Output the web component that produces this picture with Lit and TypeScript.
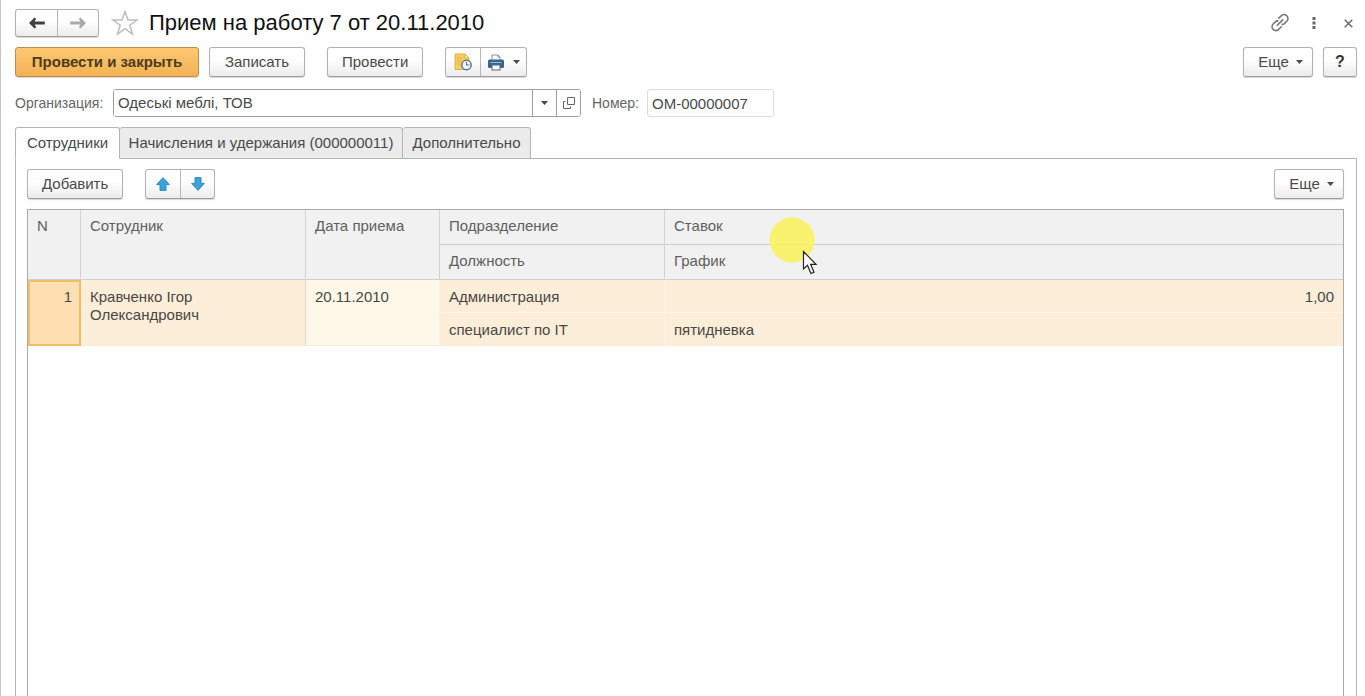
import { LitElement, html, css, svg } from "lit";
import { customElement, property, state } from "lit/decorators.js";
import { classMap } from "lit/directives/class-map.js";

interface HireRow {
  n: number;
  employee: string;
  date: string;
  department: string;
  position: string;
  rate: string;
  schedule: string;
}

const ROWS: HireRow[] = [
  {
    n: 1,
    employee: "Кравченко Ігор Олександрович",
    date: "20.11.2010",
    department: "Администрация",
    position: "специалист по IT",
    rate: "1,00",
    schedule: "пятидневка",
  },
];

const TABS = [
  { label: "Сотрудники", size: "short" },
  { label: "Начисления и удержания (000000011)", size: "long" },
  { label: "Дополнительно", size: "medium" },
];

const caret = html`<svg class="caret" width="7" height="4" viewBox="0 0 7 4" aria-hidden="true"><path d="M0 0H7L3.5 4Z" fill="#4a4a4a" /></svg>`;

const longArrow = (color: string, flip: boolean) => html`<svg width="16" height="12" viewBox="0 0 16 12" aria-hidden="true">
  <g transform=${flip ? "translate(16 0) scale(-1 1)" : ""}>
    <path d="M0 6L5.500 .5L7.200 1.800L5.600 4.600H15.800V7.400H5.600L7.200 10.200L5.500 11.500Z" fill=${color} />
  </g>
</svg>`;

const blueArrow = (down: boolean) => html`<svg width="14" height="14" viewBox="0 0 14 14" aria-hidden="true">
  <g transform=${down ? "rotate(180 7 7)" : ""}>${svg`<path d="M7 .6L13.300 7.600H10V13.400H4V7.600H.7Z" fill="#3ea3dc" stroke="#2f87c0" stroke-width="1" stroke-linejoin="round" />`}</g>
</svg>`;

@customElement("employee-table")
export class EmployeeTable extends LitElement {
  @property({ attribute: false }) rows: HireRow[] = [];

  static styles = css`
    :host {
      display: block;
      border: 1px solid #a9a9a9;
      border-bottom: 0;
      background: #fff;
      overflow: hidden;
    }
    table {
      width: 100%;
      table-layout: fixed;
      border-collapse: separate;
      border-spacing: 0;
      font-size: 15px;
      line-height: 18px;
      color: #4a4743;
    }
    .c-n { width: 53px; }
    .c-employee { width: 225px; }
    .c-date { width: 134px; }
    .c-department { width: 225px; }
    th {
      box-sizing: border-box;
      height: 35px;
      padding: 7px 9px;
      background: #f1f1f1;
      color: #5f5f5f;
      font-weight: 400;
      text-align: left;
      vertical-align: top;
      border-right: 1px solid #d2d2d2;
      border-bottom: 1px solid #cfcfcf;
    }
    th.last, td.last { border-right: 0; }
    td {
      box-sizing: border-box;
      height: 33px;
      padding: 8px 9px 6px;
      vertical-align: top;
      background: #fdeeda;
      border-right: 1px solid #fdf2e2;
      border-bottom: 1px solid #fef5e8;
    }
    td.current {
      background: #fddfb1;
      border: 2px solid #f3bd68;
      padding: 6px 7px;
      text-align: right;
    }
    td.employee { border-right-color: #e0d8cc; }
    td.date { background: #fff8e8; }
    td.number { text-align: right; }
    .bottom td, td.tall { border-bottom-color: #f3ece3; }
    td.current.tall { border-bottom-color: #f3bd68; }
  `;

  render() {
    return html`
      <table>
        <colgroup>
          <col class="c-n" /><col class="c-employee" /><col class="c-date" /><col class="c-department" /><col />
        </colgroup>
        <thead>
          <tr>
            <th rowspan="2">N</th>
            <th rowspan="2">Сотрудник</th>
            <th rowspan="2">Дата приема</th>
            <th>Подразделение</th>
            <th class="last">Ставок</th>
          </tr>
          <tr>
            <th>Должность</th>
            <th class="last">График</th>
          </tr>
        </thead>
        <tbody>
          ${this.rows.map(
            (r) => html`
              <tr>
                <td rowspan="2" class="current tall">${r.n}</td>
                <td rowspan="2" class="employee tall">${r.employee}</td>
                <td rowspan="2" class="date tall">${r.date}</td>
                <td>${r.department}</td>
                <td class="number last">${r.rate}</td>
              </tr>
              <tr class="bottom">
                <td>${r.position}</td>
                <td class="last">${r.schedule}</td>
              </tr>
            `
          )}
        </tbody>
      </table>
    `;
  }
}

@customElement("app-root")
export class AppRoot extends LitElement {
  @state() private activeTab = 0;

  static styles = css`
    :host {
      display: flex;
      flex-direction: column;
      box-sizing: border-box;
      position: relative;
      height: 100vh;
      overflow: hidden;
      padding: 9px 8px 0 14px;
      border-left: 1px solid #c4c4cb;
      background: #fff;
      color: #4a4a4a;
      font: 15px/18px "Liberation Sans", Arial, sans-serif;
    }
    button, input {
      box-sizing: border-box;
      margin: 0;
      font: inherit;
      color: inherit;
    }
    button {
      display: inline-flex;
      align-items: center;
      justify-content: center;
      padding: 0;
    }
    .row { display: flex; align-items: center; flex: none; }
    .spacer { flex: 1; }
    .title-row { height: 28px; margin-right: -8px; }
    h1 {
      margin: 0 0 0 10px;
      font-size: 22px;
      line-height: 26px;
      font-weight: 400;
      color: #111;
    }
    .btn, .group {
      box-sizing: border-box;
      height: 30px;
      border: 1px solid #b3b3b3;
      border-bottom-color: #9c9c9c;
      border-radius: 3px;
      background: linear-gradient(#fff 40%, #ececec);
      box-shadow: 0 1px 1px #d8d8d8;
    }
    .btn { min-width: 96px; padding: 0 14px; white-space: nowrap; }
    .btn.primary {
      min-width: 184px;
      border-color: #b98f4e;
      background: linear-gradient(#fdc873, #f2b255);
      color: #4e3b1c;
      font-weight: 700;
    }
    .btn.more { min-width: 70px; padding: 0 7px 0 12px; gap: 7px; }
    .btn.help { min-width: 34px; padding: 0; font-weight: 700; font-size: 16px; color: #333; }
    .group { display: inline-flex; overflow: hidden; }
    .group button { border: 0; background: none; width: 34px; }
    .group button + button { border-left: 1px solid #b8b8b8; }
    .group.nav { height: 28px; }
    .group.nav button { width: 41px; }
    .group .print { width: 46px; gap: 8px; }
    .star, .plain { border: 0; background: none; }
    .star { width: 28px; height: 28px; margin-left: 12px; }
    .plain { width: 34px; height: 28px; }
    .commands { margin-top: 10px; height: 30px; }
    .save { margin-left: 10px; }
    .post { margin-left: 22px; }
    .commands .group { margin-left: 22px; }
    .commands .help { margin-left: 10px; }
    .fields { margin-top: 12px; height: 28px; }
    .org-label { width: 98px; }
    .org-label, .num-label { font-size: 14px; color: #666; }
    .combo {
      display: flex;
      box-sizing: border-box;
      width: 468px;
      height: 28px;
      border: 1px solid #9f9f9f;
      border-radius: 3px;
      overflow: hidden;
    }
    .combo input { flex: 1; min-width: 0; border: 0; padding: 0 4px; background: #fff; }
    .combo button { width: 24px; border: 0; border-left: 1px solid #9f9f9f; background: #fff; }
    .num-label { margin: 0 5px 0 11px; width: 50px; }
    .num { width: 127px; height: 28px; border: 1px solid #dcdcdc; border-radius: 3px; padding: 0 4px; background: #fff; }
    .tabs { display: flex; flex: none; margin-top: 10px; position: relative; z-index: 1; }
    .tab {
      height: 32px;
      border: 1px solid #b4b4b4;
      border-left-width: 0;
      border-radius: 3px 3px 0 0;
      background: #ebebeb;
      padding: 0 8px;
      white-space: nowrap;
    }
    .tab:first-child { border-left-width: 1px; }
    .tab.short { min-width: 105px; }
    .tab.long { min-width: 283px; }
    .tab.medium { min-width: 128px; }
    .tab.active { background: #fff; border-bottom-color: #fff; }
    .panel {
      display: flex;
      flex-direction: column;
      flex: 1;
      min-height: 0;
      margin-top: -1px;
      border: 1px solid #b4b4b4;
      border-bottom: 0;
      padding: 10px 12px 0 11px;
    }
    .panel .group { margin-left: 22px; }
    .panel employee-table { flex: 1; margin-top: 10px; }
    .pointer { position: absolute; left: 768px; top: 217px; pointer-events: none; opacity: .85; }
    .arrow { position: absolute; left: 801px; top: 250px; pointer-events: none; }
  `;

  render() {
    return html`
      <header class="row title-row">
        <div class="group nav">
          <button aria-label="Назад">${longArrow("#3f3f3f", false)}</button>
          <button aria-label="Вперед">${longArrow("#a9a9a9", true)}</button>
        </div>
        <button class="star" aria-label="В избранное">
          <svg width="28" height="26" viewBox="0 0 28 26" aria-hidden="true">
            <path d="M14 1.5L17 10H26L18.8 15.2L21.5 24L14 18.7L6.500 24L9.200 15.200L2 10H11Z" fill="#fff" stroke="#bcbcc2" stroke-width="1.500" />
          </svg>
        </button>
        <h1>Прием на работу 7 от 20.11.2010</h1>
        <span class="spacer"></span>
        <button class="plain" aria-label="Ссылка">
          <svg width="20" height="20" viewBox="0 0 20 20" fill="none" stroke="#777" stroke-width="1.600" stroke-linecap="round" aria-hidden="true">
            <path d="M8.800 5.200L11.200 2.900A3.700 3.700 0 0 1 17 8L14.300 10.600A3.600 3.600 0 0 1 12.200 11.400" />
            <path d="M11.200 13.800L8.800 16.300A3.700 3.700 0 0 1 3 11.300L5.500 8.600A3.600 3.600 0 0 1 7.800 7.900" />
            <path d="M7.300 12.300L12.700 6.900" />
          </svg>
        </button>
        <button class="plain" aria-label="Меню">
          <svg width="4" height="14" viewBox="0 0 4 14" fill="#666" aria-hidden="true">
            <rect x=".5" y="1" width="3" height="3" /><rect x=".5" y="5.500" width="3" height="3" /><rect x=".5" y="10" width="3" height="3" />
          </svg>
        </button>
        <button class="plain" aria-label="Закрыть">
          <svg width="9" height="9" viewBox="0 0 9 9" stroke="#666" stroke-width="1.400" aria-hidden="true">
            <path d="M.7 .7L8.300 8.300M8.300 .7L.7 8.300" />
          </svg>
        </button>
      </header>

      <div class="row commands">
        <button class="btn primary">Провести и закрыть</button>
        <button class="btn save">Записать</button>
        <button class="btn post">Провести</button>
        <div class="group">
          <button aria-label="Отчет">
            <svg width="20" height="18" viewBox="0 0 20 18" aria-hidden="true">
              <path d="M2 1H12L16 5V16.500H2Z" fill="#f3cd63" stroke="#dfb148" />
              <path d="M12 1V5H16Z" fill="#fff3c4" stroke="#dfb148" />
              <path d="M4 5H9M4 8H8M4 11H7" stroke="#dfb148" />
              <circle cx="13.500" cy="12" r="4.700" fill="#f4f8fc" stroke="#5b7594" stroke-width="1.500" />
              <path d="M13.500 9V12H16.500" fill="none" stroke="#5b7594" stroke-width="1.200" />
            </svg>
          </button>
          <button class="print" aria-label="Печать">
            <svg width="18" height="17" viewBox="0 0 18 17" aria-hidden="true">
              <path d="M5 7V1H11L13 3V7" fill="#fff" stroke="#7893ad" />
              <path d="M11 1V3H13" fill="none" stroke="#7893ad" />
              <rect x="1" y="5.500" width="16" height="8.500" rx="1.500" fill="#3b658c" />
              <rect x="3.500" y="8" width="11" height="1" fill="#9fb9d0" />
              <rect x="5" y="11" width="8" height="5" fill="#fff" stroke="#486c8e" />
            </svg>
            ${caret}
          </button>
        </div>
        <span class="spacer"></span>
        <button class="btn more">Еще ${caret}</button>
        <button class="btn help" aria-label="Справка">?</button>
      </div>

      <div class="row fields">
        <label class="org-label" for="org">Организация:</label>
        <div class="combo">
          <input id="org" type="text" .value=${"Одеські меблі, ТОВ"} />
          <button aria-label="Выбрать">${caret}</button>
          <button aria-label="Открыть">
            <svg width="12" height="12" viewBox="0 0 12 12" fill="none" stroke="#666" aria-hidden="true">
              <path d="M4.500 .5H11.500V7.500H4.500Z" /><path d="M2.500 4.500H.5V11.500H7.500V9.500" />
            </svg>
          </button>
        </div>
        <label class="num-label" for="num">Номер:</label>
        <input id="num" class="num" type="text" .value=${"ОМ-00000007"} />
      </div>

      <div class="tabs" role="tablist">
        ${TABS.map(
          (t, i) => html`<button
            role="tab"
            aria-selected=${i === this.activeTab ? "true" : "false"}
            class=${classMap({ tab: true, [t.size]: true, active: i === this.activeTab })}
            @click=${() => (this.activeTab = i)}
          >${t.label}</button>`
        )}
      </div>

      <section class="panel" role="tabpanel">
        <div class="row">
          <button class="btn">Добавить</button>
          <div class="group">
            <button aria-label="Вверх">${blueArrow(false)}</button>
            <button aria-label="Вниз">${blueArrow(true)}</button>
          </div>
          <span class="spacer"></span>
          <button class="btn more">Еще ${caret}</button>
        </div>
        <employee-table .rows=${ROWS}></employee-table>
      </section>

      <svg class="pointer" width="46" height="46" viewBox="0 0 46 46" aria-hidden="true"><circle cx="23" cy="23" r="22.500" fill="#faf358" /></svg>
      <svg class="arrow" width="16" height="26" viewBox="0 0 16 26" aria-hidden="true">
        <path d="M1.500 1.500V19L5.500 15.300L9 23.500L12 22.200L8.600 14.300H14Z" fill="#fff" stroke="#222" stroke-width="1.200" />
      </svg>
    `;
  }
}
